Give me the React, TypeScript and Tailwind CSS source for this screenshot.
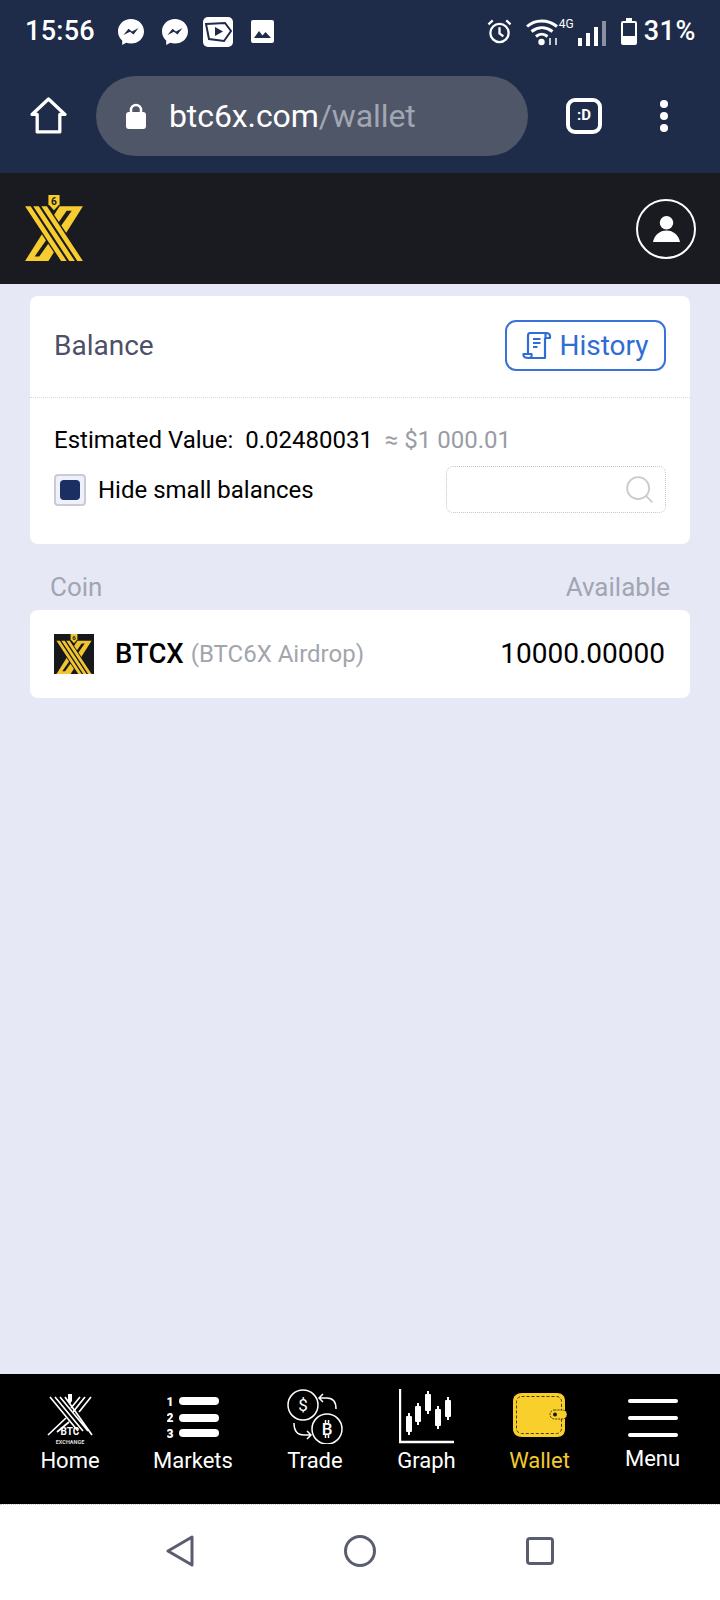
import { Search } from 'lucide-react';

const NAV_LABEL = 'text-[22px] leading-[24px] text-white';

function Logo({ color, bg, className }: { color: string; bg: string; className: string }) {
  return (
    <svg viewBox="0 0 57 65" className={className}>
      <path d="M34 11H57L23 65H0Z" fill={color} />
      <path d="M41 15.500H46L14 60.500H9.500Z" fill={bg} />
      <path d="M-2 11H23L59 65H34Z" fill={bg} />
      <path d="M0 11H5.500L41 65H35.500ZM8 11H13.500L49 65H43.500ZM16 11H21.500L57 65H51.500Z" fill={color} />
      <path d="M23 0H34V9L28.500 15L23 9Z" fill={color} />
      <text x="28.500" y="9.500" textAnchor="middle" fontSize="10" fontWeight="700" fontFamily="Roboto, sans-serif" fill={bg}>
        6
      </text>
    </svg>
  );
}

function Messenger() {
  return (
    <svg viewBox="0 0 26 26" className="w-[26px] h-[26px]">
      <path d="M13 0C5.800 0 0 5.400 0 12.400c0 3.700 1.600 6.900 4.200 9.100V26l4-2.200c1.500.4 3.100.7 4.800.7 7.200 0 13-5.200 13-12.100S20.200 0 13 0Z" fill="#fff" />
      <path d="M5.500 16L10.500 9.800L14 12.500L20.500 9L15.500 15.500L12 12.800Z" fill="#1e2b49" />
    </svg>
  );
}

function StatusBar() {
  return (
    <div className="h-[63px] flex items-center pl-[25px] pr-[24px] text-white">
      <span className="text-[27px] font-medium leading-none tracking-[0.3px]">15:56</span>
      <div className="flex items-center ml-[23px] gap-[18px]">
        <Messenger />
        <Messenger />
        <svg viewBox="0 0 30 30" className="w-[30px] h-[30px] -ml-[3px]">
          <rect width="30" height="30" rx="5" fill="#fff" />
          <path d="M3 7L22 6L28 14L21 24L6 22Z" fill="none" stroke="#1e2b49" strokeWidth="2" />
          <path d="M12 10L20 14.500L12 19Z" fill="#1e2b49" />
        </svg>
        <svg viewBox="0 0 23 23" className="w-[23px] h-[23px]">
          <rect width="23" height="23" rx="2" fill="#fff" />
          <path d="M3 18L8 11L11.500 15.500L14.500 12L20 18Z" fill="#1e2b49" />
        </svg>
      </div>
      <div className="ml-auto flex items-center">
        <svg viewBox="0 0 26 26" className="w-[25px] h-[25px] mr-[14px]" fill="none" stroke="#fff" strokeWidth="2.400">
          <circle cx="13" cy="14.500" r="9.500" />
          <path d="M13 8.500V15L17 18M1.500 5.500L6 1.500M24.500 5.500L20 1.500" />
        </svg>
        <svg viewBox="0 0 33 28" className="w-[33px] h-[28px]" fill="none" stroke="#fff" strokeWidth="3">
          <path d="M1 8.500C9 1 22 1 31 8.500M5.500 13.500C12 8.500 20 8.500 26.500 13.500M10 18.500C13.500 15.500 18 15.500 21.500 18.500" />
          <circle cx="15.500" cy="24" r="3.200" fill="#fff" stroke="none" />
          <path d="M24 20V27M30 20V27" strokeWidth="1.500" />
        </svg>
        <div className="flex items-end h-[28px] mt-[1px]">
          <span className="text-[12px] leading-none self-start">4G</span>
          <div className="flex items-end gap-[4px] ml-[4px]">
            <div className="w-[4px] h-[8px] bg-white" />
            <div className="w-[4px] h-[13px] bg-white" />
            <div className="w-[4px] h-[19px] bg-white" />
            <div className="w-[4px] h-[25px] bg-[#8b90a0]" />
          </div>
        </div>
        <div className="relative w-[16px] h-[24px] ml-[15px] rounded-[2px] border-[2px] border-white mt-[3px]">
          <div className="absolute left-[3px] -top-[5px] w-[6px] h-[3px] bg-white" />
          <div className="absolute left-0 right-0 bottom-0 h-[7px] bg-white" />
        </div>
        <span className="text-[27px] font-medium leading-none ml-[7px] tracking-[0.6px]">31%</span>
      </div>
    </div>
  );
}

function BrowserBar() {
  return (
    <div className="h-[110px] pb-[5px] flex items-center pl-[30px] text-white">
      <svg viewBox="0 0 36 36" className="w-[37px] h-[37px]" fill="none" stroke="#fff" strokeWidth="3.200" strokeLinejoin="round">
        <path d="M2 17L18 2L34 17H29V34H7V17Z" />
      </svg>
      <div className="ml-[29px] w-[432px] h-[80px] rounded-full bg-[#4f5668] flex items-center pl-[30px]">
        <svg viewBox="0 0 20 26" className="w-[20px] h-[26px]">
          <path d="M5 11V7a5 5 0 0 1 10 0v4" fill="none" stroke="#fff" strokeWidth="2.500" />
          <rect y="9" width="20" height="17" rx="3" fill="#fff" />
        </svg>
        <span className="ml-[23px] text-[32px] leading-none tracking-[-0.1px]">
          btc6x.com<span className="text-[#a2a6b2]">/wallet</span>
        </span>
      </div>
      <div className="ml-[38px] w-[36px] h-[36px] rounded-[9px] border-[4px] border-white flex items-center justify-center text-[15px] font-bold leading-none">
        :D
      </div>
      <div className="ml-[58px] flex flex-col gap-[4px]">
        <div className="w-[8px] h-[8px] rounded-full bg-white" />
        <div className="w-[8px] h-[8px] rounded-full bg-white" />
        <div className="w-[8px] h-[8px] rounded-full bg-white" />
      </div>
    </div>
  );
}

function ScrollIcon() {
  return (
    <svg viewBox="0 0 30 29" className="w-[30px] h-[29px]" fill="none" stroke="#2f6dd5" strokeWidth="2.200" strokeLinejoin="round">
      <path d="M24 2H8C6 2 6 3.500 6 5V22M24 2C27 2 28 3 28 5.500V7H23.500V4C23.500 3 24 2 24 2Z" />
      <path d="M23 7V27H7C9 27 10 26 9.500 23H1.500C1 26 3 27 7 27" />
      <path d="M11 8H18.500M11 12H18.500M11 16H15.500" strokeWidth="1.800" />
    </svg>
  );
}

function BalanceCard() {
  return (
    <div className="bg-white rounded-[8px] h-[248px]">
      <div className="h-[102px] border-b border-dotted border-[#d8dae3] flex items-center justify-between pl-[24px] pr-[24px]">
        <span className="text-[28px] leading-none text-[#4c5068] -mt-[2px]">Balance</span>
        <button className="w-[161px] h-[51px] -mt-[2px] rounded-[11px] border-2 border-[#3a72d8] flex items-center justify-center gap-[7px] text-[28px] leading-none text-[#2f6dd5]">
          <ScrollIcon />
          History
        </button>
      </div>
      <div className="pl-[24px] pr-[24px] pt-[29px]">
        <div className="text-[24px] leading-[26px] text-black whitespace-pre">
          Estimated Value:{'  '}0.02480031 <span className="text-[#9a9ca6]"> ≈ $1 000.01</span>
        </div>
        <div className="flex items-center justify-between mt-[13px]">
          <label className="flex items-center gap-[12px] text-[24px] leading-none text-black">
            <span className="w-[32px] h-[32px] rounded-[4px] border-2 border-[#c9ccd6] bg-[#eff1fa] flex items-center justify-center">
              <span className="w-[20px] h-[20px] rounded-[4px] bg-[#1b2f63]" />
            </span>
            Hide small balances
          </label>
          <div className="w-[220px] h-[47px] rounded-[7px] border border-dotted border-[#c2c4d4] flex items-center justify-end pr-[9px]">
            <Search className="w-[33px] h-[33px] text-[#c9cbd0]" strokeWidth={1.300} />
          </div>
        </div>
      </div>
    </div>
  );
}

function HomeIcon() {
  return (
    <svg viewBox="0 0 46 50" className="w-[46px] h-[50px]">
      <path d="M44 3L32 18M38 3L26 18M33 3L24 14M19 24L1 41M22 28L10 38" stroke="#fff" strokeWidth="1.700" fill="none" />
      <path d="M3 3L31 37M8 3L36 37M13 3L41 37M18 3L45 41" stroke="#fff" strokeWidth="1.700" fill="none" />
      <path d="M21 0H25V7L23 10L21 7Z" fill="#fff" />
      <text x="23" y="41" textAnchor="middle" fontSize="10" fontWeight="700" fontFamily="Roboto, sans-serif" fill="#fff">BTC</text>
      <text x="23" y="49.500" textAnchor="middle" fontSize="5.500" fontWeight="700" fontFamily="Roboto, sans-serif" fill="#ddd">EXCHANGE</text>
    </svg>
  );
}

function MarketsIcon() {
  return (
    <svg viewBox="0 0 52 46" className="w-[52px] h-[46px]">
      <g fontSize="12" fontWeight="900" fontFamily="Roboto, sans-serif" fill="#fff" textAnchor="middle">
        <text x="3" y="12">1</text>
        <text x="3" y="28">2</text>
        <text x="3" y="44">3</text>
      </g>
      <rect x="12" y="3" width="40" height="8" rx="4" fill="#fff" />
      <rect x="12" y="20" width="40" height="8" rx="4" fill="#fff" />
      <rect x="12" y="35" width="40" height="8" rx="4" fill="#fff" />
    </svg>
  );
}

function TradeIcon() {
  return (
    <svg viewBox="0 0 56 55" className="w-[56px] h-[55px]" fill="none" stroke="#fff" strokeWidth="1.500">
      <circle cx="16" cy="16" r="15" />
      <circle cx="40" cy="40" r="15" />
      <path d="M32 9H40C46 9 49 13 49 20M36 5L32 9L36 13" />
      <path d="M7 34C7 42 10 46 17 46H24M20 42L24 46L20 50" />
      <text x="16" y="22" textAnchor="middle" fontSize="17" fontFamily="Roboto, sans-serif" fill="#fff" stroke="none">$</text>
      <text x="40" y="46" textAnchor="middle" fontSize="17" fontWeight="500" fontFamily="Roboto, sans-serif" fill="#fff" stroke="none">B</text>
      <path d="M38.500 31V34M41.500 31V34M38.500 46V49M41.500 46V49" />
    </svg>
  );
}

function GraphIcon() {
  const candles = [
    [10, 24, 46],
    [19, 14, 36],
    [29, 2, 25],
    [39, 17, 40],
    [49, 8, 31],
  ];
  return (
    <svg viewBox="0 0 55 55" className="w-[55px] h-[55px]">
      <path d="M1 0V53H55" fill="none" stroke="#fff" strokeWidth="2.400" />
      {candles.map(([x, a, b]) => (
        <g key={x} fill="#fff">
          <rect x={x - 1} y={a} width="2" height={b - a} />
          <rect x={x - 3} y={a + 3} width="6" height={b - a - 6} rx="1" />
        </g>
      ))}
    </svg>
  );
}

function WalletIcon() {
  return (
    <svg viewBox="0 0 54 44" className="w-[54px] h-[44px]">
      <path d="M9 0H44C49 0 52 3 52 8V36C52 41 49 44 44 44H9C4 44 0 41 0 36V8C0 3 4 0 9 0Z" fill="#f9cf2b" />
      <rect x="3.500" y="3.500" width="45" height="37" rx="5" fill="none" stroke="#4a3d10" strokeWidth="1" strokeDasharray="3 2" />
      <rect x="37" y="17" width="17" height="9" rx="4.500" fill="#f9cf2b" stroke="#4a3d10" strokeWidth="1" strokeDasharray="2 1" />
      <circle cx="42" cy="21.500" r="2" fill="#1a1a1a" />
    </svg>
  );
}

function MenuIcon() {
  return (
    <div className="flex flex-col gap-[13px]">
      <div className="w-[50px] h-[4px] rounded-full bg-white" />
      <div className="w-[50px] h-[4px] rounded-full bg-white" />
      <div className="w-[50px] h-[4px] rounded-full bg-white" />
    </div>
  );
}

function BottomNav() {
  return (
    <div className="h-[130px] bg-black flex pl-[8px] pt-[15px]">
      <div className="w-[124px] flex flex-col items-center">
        <div className="h-[55px] flex items-end"><HomeIcon /></div>
        <span className={`${NAV_LABEL} mt-[5px]`}>Home</span>
      </div>
      <div className="w-[122px] flex flex-col items-center">
        <div className="h-[55px] flex items-end pb-[4px]"><MarketsIcon /></div>
        <span className={`${NAV_LABEL} mt-[5px]`}>Markets</span>
      </div>
      <div className="w-[122px] flex flex-col items-center">
        <div className="h-[55px] flex items-end"><TradeIcon /></div>
        <span className={`${NAV_LABEL} mt-[5px]`}>Trade</span>
      </div>
      <div className="w-[107px] -ml-[3px] mr-[3px] flex flex-col items-center">
        <div className="h-[55px] flex items-end"><GraphIcon /></div>
        <span className={`${NAV_LABEL} mt-[5px]`}>Graph</span>
      </div>
      <div className="w-[113px] flex flex-col items-center">
        <div className="h-[55px] flex items-end pb-[7px]"><WalletIcon /></div>
        <span className="text-[22px] leading-[24px] text-[#f3cb2c] mt-[5px]">Wallet</span>
      </div>
      <div className="w-[113px] flex flex-col items-center">
        <div className="h-[55px] pt-[10px]"><MenuIcon /></div>
        <span className={`${NAV_LABEL} mt-[3px]`}>Menu</span>
      </div>
    </div>
  );
}

function AndroidNav() {
  return (
    <div className="h-[96px] bg-white border-t border-dotted border-[#c9c9dc] flex items-center justify-center gap-[150px] pb-[4px]">
      <svg viewBox="0 0 28 32" className="w-[28px] h-[32px]" fill="none" stroke="#5a5d6e" strokeWidth="3" strokeLinejoin="round">
        <path d="M26 2V30L2 16Z" />
      </svg>
      <div className="w-[32px] h-[32px] rounded-full border-[3px] border-[#5a5d6e]" />
      <div className="w-[28px] h-[28px] rounded-[4px] border-[3px] border-[#5a5d6e]" />
    </div>
  );
}

export default function App() {
  return (
    <div className="w-[720px] h-[1600px] flex flex-col bg-[#e6e9f5] font-['Roboto',sans-serif]">
      <div className="bg-[#1e2b49]">
        <StatusBar />
        <BrowserBar />
      </div>
      <div className="h-[111px] bg-[#1a1b20] flex items-center justify-between pl-[25px] pr-[24px]">
        <Logo color="#f7cc2e" bg="#1a1b20" className="w-[58px] h-[66px] -mt-[1px]" />
        <div className="w-[60px] h-[60px] rounded-full border-2 border-white flex items-center justify-center">
          <svg viewBox="0 0 28 27" className="w-[27px] h-[26px]" fill="#fff">
            <circle cx="14" cy="7" r="7" />
            <path d="M0 27C1 20 7 15 14 15S27 20 28 27Z" />
          </svg>
        </div>
      </div>
      <div className="flex-1 px-[30px] pt-[12px]">
        <BalanceCard />
        <div className="flex justify-between pl-[20px] pr-[20px] mt-[28px] text-[26px] leading-[30px] text-[#a1a5b3]">
          <span>Coin</span>
          <span>Available</span>
        </div>
        <div className="mt-[8px] h-[88px] bg-white rounded-[8px] flex items-center pl-[24px] pr-[25px]">
          <div className="w-[40px] h-[40px] bg-[#17181c] flex items-center justify-center">
            <Logo color="#f1c530" bg="#17181c" className="w-[36px] h-[40px]" />
          </div>
          <span className="ml-[21px] text-[27.500px] font-medium leading-none text-black">BTCX</span>
          <span className="ml-[7px] text-[24px] leading-none text-[#a3a5ad]">(BTC6X Airdrop)</span>
          <span className="ml-auto text-[28px] leading-none text-black">10000.00000</span>
        </div>
      </div>
      <BottomNav />
      <AndroidNav />
    </div>
  );
}
